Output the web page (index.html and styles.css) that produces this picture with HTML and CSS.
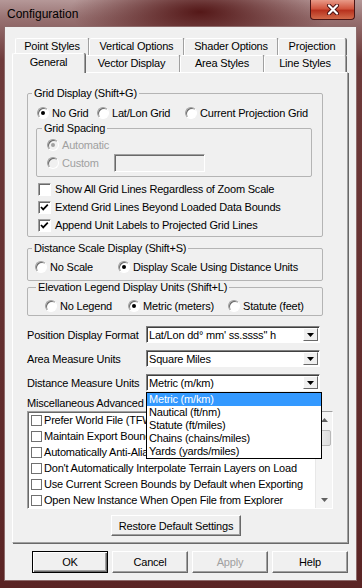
FILE: index.html
```html
<!DOCTYPE html>
<html lang="en">
  <head>
    <meta charset="UTF-8" />
    <title>Configuration</title>
    <link rel="stylesheet" href="styles.css">
  </head>
  <body>
    <div class="window">
      <div class="titlebar">
        <span class="title">Configuration</span>
        <div class="close-btn">
          <svg width="14" height="11" viewBox="0 0 14 11">
            <path d="M3 1.5 L11 9.5 M11 1.5 L3 9.5" stroke="#4a1010" stroke-width="4" stroke-linecap="round" />
            <path d="M3 1.5 L11 9.5 M11 1.5 L3 9.5" stroke="#fff" stroke-width="2.2" stroke-linecap="round" />
          </svg>
        </div>
      </div>

      <div class="client">
        <div class="tab-control">
          <div class="tab-row back">
            <div class="tab tab-point">Point Styles</div>
            <div class="tab tab-vertical">Vertical Options</div>
            <div class="tab tab-shader">Shader Options</div>
            <div class="tab tab-projection">Projection</div>
          </div>
          <div class="tab-row front">
            <div class="tab tab-general selected">General</div>
            <div class="tab tab-vector">Vector Display</div>
            <div class="tab tab-area">Area Styles</div>
            <div class="tab tab-line">Line Styles</div>
          </div>

          <div class="tab-page">
            <fieldset class="group grid-display">
              <legend>Grid Display (Shift+G)</legend>
              <div class="row grid-radios">
                <span class="opt w-nogrid"><span class="radio checked"></span>No Grid</span>
                <span class="opt w-latlon"><span class="radio"></span>Lat/Lon Grid</span>
                <span class="opt"><span class="radio"></span>Current Projection Grid</span>
              </div>

              <fieldset class="group grid-spacing">
                <legend>Grid Spacing</legend>
                <div class="row spacing-auto disabled">
                  <span class="opt"><span class="radio checked"></span>Automatic</span>
                </div>
                <div class="row disabled">
                  <span class="opt w-custom"><span class="radio"></span>Custom</span>
                  <span class="textbox"></span>
                </div>
              </fieldset>

              <div class="checks">
                <div class="row">
                  <span class="opt"><span class="check"></span>Show All Grid Lines Regardless of Zoom Scale</span>
                </div>
                <div class="row">
                  <span class="opt"><span class="check"><svg width="11" height="11" viewBox="0 0 11 11"><polyline points="2,5 4.2,7.4 8.8,2.6" fill="none" stroke="#000" stroke-width="1.7" /></svg></span>Extend Grid Lines Beyond Loaded Data Bounds</span>
                </div>
                <div class="row">
                  <span class="opt"><span class="check"><svg width="11" height="11" viewBox="0 0 11 11"><polyline points="2,5 4.2,7.4 8.8,2.6" fill="none" stroke="#000" stroke-width="1.7" /></svg></span>Append Unit Labels to Projected Grid Lines</span>
                </div>
              </div>
            </fieldset>

            <fieldset class="group distance-scale">
              <legend>Distance Scale Display (Shift+S)</legend>
              <div class="row">
                <span class="opt w-noscale"><span class="radio"></span>No Scale</span>
                <span class="opt"><span class="radio checked"></span>Display Scale Using Distance Units</span>
              </div>
            </fieldset>

            <fieldset class="group elevation">
              <legend>Elevation Legend Display Units (Shift+L)</legend>
              <div class="row">
                <span class="opt w-nolegend"><span class="radio"></span>No Legend</span>
                <span class="opt w-metric"><span class="radio checked"></span>Metric (meters)</span>
                <span class="opt"><span class="radio"></span>Statute (feet)</span>
              </div>
            </fieldset>

            <div class="field-row first">
              <span class="field-label">Position Display Format</span>
              <div class="combo">
                <span class="combo-text">Lat/Lon dd° mm' ss.ssss" h</span>
                <span class="combo-btn"><svg width="7" height="4" viewBox="0 0 7 4"><path d="M0 0 H7 L3.5 4 Z" fill="#000" /></svg></span>
              </div>
            </div>
            <div class="field-row">
              <span class="field-label">Area Measure Units</span>
              <div class="combo">
                <span class="combo-text">Square Miles</span>
                <span class="combo-btn"><svg width="7" height="4" viewBox="0 0 7 4"><path d="M0 0 H7 L3.5 4 Z" fill="#000" /></svg></span>
              </div>
            </div>
            <div class="field-row">
              <span class="field-label">Distance Measure Units</span>
              <div class="combo open">
                <span class="combo-text">Metric (m/km)</span>
                <span class="combo-btn"><svg width="7" height="4" viewBox="0 0 7 4"><path d="M0 0 H7 L3.5 4 Z" fill="#000" /></svg></span>
                <ul class="dropdown">
                  <li class="active">Metric (m/km)</li>
                  <li>Nautical (ft/nm)</li>
                  <li>Statute (ft/miles)</li>
                  <li>Chains (chains/miles)</li>
                  <li>Yards (yards/miles)</li>
                </ul>
              </div>
            </div>

            <div class="misc-label">Miscellaneous Advanced Options</div>
            <div class="listbox">
              <ul class="list-items">
                <li><span class="flat-check"></span>Prefer World File (TFW) Over Embedded GeoTIFF Info</li>
                <li><span class="flat-check"></span>Maintain Export Bounds Aspect Ratio</li>
                <li><span class="flat-check"></span>Automatically Anti-Alias Imagery</li>
                <li><span class="flat-check"></span>Don't Automatically Interpolate Terrain Layers on Load</li>
                <li><span class="flat-check"></span>Use Current Screen Bounds by Default when Exporting</li>
                <li><span class="flat-check"></span>Open New Instance When Open File from Explorer</li>
              </ul>
              <div class="scrollbar">
                <span class="sb-arrow"><svg width="7" height="4" viewBox="0 0 7 4"><path d="M0 4 H7 L3.5 0 Z" fill="#606060" /></svg></span>
                <span class="sb-thumb"></span>
                <span class="sb-track"></span>
                <span class="sb-arrow"><svg width="7" height="4" viewBox="0 0 7 4"><path d="M0 0 H7 L3.5 4 Z" fill="#606060" /></svg></span>
              </div>
            </div>

            <button class="btn restore">Restore Default Settings</button>
          </div>
        </div>

        <div class="dialog-buttons">
          <button class="btn default">OK</button>
          <button class="btn">Cancel</button>
          <button class="btn disabled">Apply</button>
          <button class="btn">Help</button>
        </div>
      </div>
    </div>
  </body>
</html>
```

FILE: styles.css
```css
body {
  margin: 0;
  width: 362px;
  height: 588px;
  overflow: hidden;
  font-family: "Liberation Sans", Arial, sans-serif;
  font-size: 11px;
  letter-spacing: -0.2px;
  color: #000;
}

.window {
  height: 588px;
  display: flex;
  flex-direction: column;
  background:
    radial-gradient(ellipse 130px 42px at 200px 12px, rgba(80, 18, 18, 0.95), rgba(80, 18, 18, 0)),
    linear-gradient(180deg, #b59898 0, #987272 18px, #6e3a3a 60px, #5a2424 100%);
}

.titlebar {
  height: 27px;
  display: flex;
  justify-content: space-between;
  align-items: flex-start;
}
.title {
  margin: 7px 0 0 7px;
  font-size: 12px;
  line-height: 14px;
  letter-spacing: 0;
}
.close-btn {
  width: 45px;
  height: 20px;
  margin-right: 7px;
  box-sizing: border-box;
  border: 1px solid #4a1414;
  border-top: none;
  border-radius: 0 0 4px 4px;
  background: linear-gradient(180deg, #e89a88 0, #d1563f 45%, #b8321e 55%, #d26a4a 100%);
  display: flex;
  align-items: center;
  justify-content: center;
}

.client {
  flex: 1;
  margin: 0 6px 8px 5px;
  background: #f0f0f0;
  box-shadow: 0 0 0 1px #8d6a6a;
  display: flex;
  flex-direction: column;
}

/* tabs */
.tab-control {
  margin: 11px 0 0 7px;
  width: 336px;
}
.tab-row {
  display: flex;
  height: 17px;
  align-items: flex-end;
}
.tab-row.back {
  padding-left: 3px;
}
.tab-row.front {
  padding-left: 2px;
}
.tab {
  box-sizing: border-box;
  height: 17px;
  border: 1px solid #fff;
  border-right-color: #a0a0a0;
  border-bottom: none;
  border-radius: 2px 2px 0 0;
  box-shadow: 1px 0 0 #696969;
  background: #f0f0f0;
  text-align: center;
  line-height: 15px;
  white-space: nowrap;
}
.tab-point { width: 74px; }
.tab-vertical { width: 95px; }
.tab-shader { width: 94px; }
.tab-projection { width: 68px; }
.tab-general { width: 69px; }
.tab-vector { width: 97px; }
.tab-area { width: 84px; }
.tab-line { width: 82px; }
.tab.selected {
  position: relative;
  z-index: 1;
  height: 20px;
  width: 73px;
  margin: 0 -2px -1px -2px;
  line-height: 16px;
}

.tab-page {
  box-sizing: border-box;
  border: 1px solid #fff;
  border-right-color: #a0a0a0;
  border-bottom-color: #a0a0a0;
  box-shadow: 1px 1px 0 #696969;
  padding: 14px 0 6px 14px;
}

/* group boxes */
.group {
  margin: 0;
  padding: 0;
  border: 1px solid #b4b4b4;
  border-radius: 2px;
  min-width: 0;
}
.group legend {
  padding: 0 2px;
  margin-left: 4px;
  line-height: 13px;
}
.grid-display,
.distance-scale,
.elevation {
  width: 296px;
  box-sizing: border-box;
}
.grid-display {
  padding-bottom: 2px;
}
.grid-radios {
  margin-top: 4px;
  padding-left: 9px;
}
.grid-spacing {
  margin-left: 8px;
  width: 276px;
  box-sizing: border-box;
  padding: 0 0 4px 10px;
}
.grid-spacing legend {
  margin-left: -5px;
}
.spacing-auto {
  margin-top: 1px;
}
.checks {
  margin-top: 3px;
  padding-left: 10px;
}
.distance-scale {
  margin-top: 5px;
  padding: 0 0 4px 7px;
}
.distance-scale legend {
  margin-left: -3px;
}
.elevation {
  padding: 0 0 0 17px;
}
.elevation legend {
  margin-left: -9px;
}
.distance-scale .row,
.elevation .row {
  margin-top: 3px;
}

.row {
  display: flex;
  align-items: center;
  height: 18px;
  white-space: nowrap;
}
.opt {
  display: flex;
  align-items: center;
  gap: 3px;
}
.w-nogrid { width: 60px; }
.w-latlon { width: 88px; }
.w-custom { width: 67px; }
.w-noscale { width: 83px; }
.w-nolegend { width: 83px; }
.w-metric { width: 100px; }

.radio {
  position: relative;
  box-sizing: border-box;
  width: 12px;
  height: 12px;
  border-radius: 50%;
  border: 1px solid;
  border-color: #a0a0a0 #fff #fff #a0a0a0;
  box-shadow: inset 1px 1px 0 #696969;
  background: #fff;
  flex: none;
}
.radio.checked::after {
  content: "";
  position: absolute;
  left: 3px;
  top: 3px;
  width: 4px;
  height: 4px;
  border-radius: 50%;
  background: #000;
}
.disabled {
  color: #a0a0a0;
}
.disabled .radio {
  background: #f0f0f0;
}
.disabled .radio.checked::after {
  background: #a0a0a0;
}
.textbox {
  box-sizing: border-box;
  width: 91px;
  height: 18px;
  border: 1px solid;
  border-color: #a0a0a0 #fff #fff #a0a0a0;
  box-shadow: inset 1px 1px 0 #696969;
  background: #f0f0f0;
}

.check {
  box-sizing: border-box;
  width: 13px;
  height: 13px;
  border: 1px solid;
  border-color: #a0a0a0 #fff #fff #a0a0a0;
  box-shadow: inset 1px 1px 0 #696969;
  background: #fff;
  margin-right: 1px;
  flex: none;
  display: flex;
}

/* combo rows */
.field-row {
  display: flex;
  align-items: center;
  margin-top: 7px;
}
.field-row.first {
  margin-top: 10px;
}
.field-label {
  width: 119px;
  white-space: nowrap;
}
.combo {
  position: relative;
  box-sizing: border-box;
  width: 174px;
  height: 17px;
  border: 1px solid;
  border-color: #808080 #fff #fff #808080;
  box-shadow: inset 1px 1px 0 #404040;
  background: #fff;
  display: flex;
  align-items: center;
  justify-content: space-between;
}
.combo-text {
  padding-left: 2px;
  white-space: nowrap;
}
.combo-btn {
  box-sizing: border-box;
  width: 15px;
  height: 13px;
  margin-right: 1px;
  border: 1px solid;
  border-color: #fff #696969 #696969 #fff;
  background: #f0f0f0;
  display: flex;
  align-items: center;
  justify-content: center;
}
.dropdown {
  position: absolute;
  z-index: 5;
  top: 17px;
  left: -1px;
  width: 176px;
  box-sizing: border-box;
  margin: 0;
  padding: 0;
  list-style: none;
  border: 1px solid #000;
  background: #fff;
}
.dropdown li {
  height: 13px;
  line-height: 13px;
  padding-left: 2px;
  white-space: nowrap;
}
.dropdown li.active {
  background: #3399ff;
  color: #fff;
}

/* misc list */
.misc-label {
  margin-top: 6px;
  line-height: 13px;
  white-space: nowrap;
}
.listbox {
  margin-top: 1px;
  width: 306px;
  height: 98px;
  box-sizing: border-box;
  border: 1px solid;
  border-color: #a0a0a0 #fff #fff #a0a0a0;
  box-shadow: inset 1px 1px 0 #696969;
  background: #fff;
  display: flex;
  overflow: hidden;
}
.list-items {
  flex: 1;
  margin: 0;
  padding: 0 0 0 3px;
  list-style: none;
  overflow: hidden;
}
.list-items li {
  height: 16px;
  display: flex;
  align-items: center;
  gap: 2px;
  white-space: nowrap;
}
.flat-check {
  box-sizing: border-box;
  width: 11px;
  height: 11px;
  border: 1px solid #707070;
  background: #fff;
  flex: none;
}
.scrollbar {
  width: 16px;
  display: flex;
  flex-direction: column;
  background: #f4f4f4;
  border-left: 1px solid #e8e8e8;
}
.sb-arrow {
  height: 16px;
  display: flex;
  align-items: center;
  justify-content: center;
  flex: none;
}
.sb-thumb {
  margin: 2px 1px 0 2px;
  height: 14px;
  border: 1px solid #b8b8b8;
  border-radius: 2px;
  background: linear-gradient(90deg, #ececec, #dcdcdc);
  flex: none;
}
.sb-track {
  flex: 1;
}

/* buttons */
.btn {
  box-sizing: border-box;
  height: 22px;
  border: 1px solid;
  border-color: #fff #696969 #696969 #fff;
  box-shadow: inset -1px -1px 0 #a0a0a0;
  background: #f0f0f0;
  font-family: inherit;
  font-size: 11px;
  letter-spacing: inherit;
  color: #000;
  padding: 0;
}
.restore {
  display: block;
  margin: 6px 0 0 84px;
  width: 130px;
  height: 21px;
}
.dialog-buttons {
  display: flex;
  gap: 4px;
  margin: 8px 0 0 27px;
}
.dialog-buttons .btn {
  width: 76px;
}
.btn.default {
  outline: 1px solid #000;
  outline-offset: -1px;
  border-color: #000 #000 #000 #000;
  box-shadow: inset 1px 1px 0 #fff, inset -1px -1px 0 #696969, inset -2px -2px 0 #a0a0a0;
}
.btn.disabled {
  color: #a0a0a0;
}
```
